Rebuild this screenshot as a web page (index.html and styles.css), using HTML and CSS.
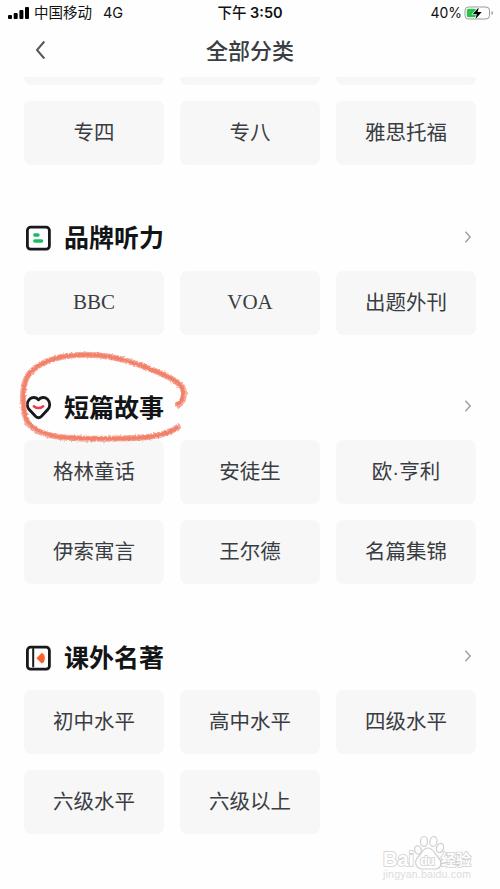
FILE: index.html
```html
<!DOCTYPE html>
<html lang="zh-CN">
<head>
<meta charset="utf-8">
<title>全部分类</title>
<link rel="stylesheet" href="styles.css">
</head>
<body>
<main class="screen">
  <div class="status">
    <div class="carrier">
      <svg width="22" height="14" viewBox="0 0 22 14"><rect x="0" y="9" width="4" height="4" rx="1"/><rect x="5.7" y="7" width="4" height="6" rx="1"/><rect x="11.4" y="4" width="4" height="9" rx="1"/><rect x="17" y="1" width="4" height="12" rx="1"/></svg>
      <span class="operator">中国移动</span><span class="network">4G</span>
    </div>
    <div class="clock"><span>下午</span> 3:50</div>
    <div class="battery"><span>40%</span>
      <svg width="30" height="14" viewBox="0 0 30 14"><rect x="1" y="1" width="24.5" height="12" rx="3.5" fill="none" stroke="#999"/><path d="M27.5 5v4q1.5-.7 1.5-2t-1.5-2z" fill="#999"/><rect x="2.8" y="2.8" width="9.5" height="8.4" rx="1.6" fill="#27c34e"/><path d="M14.9 1.2 8.8 8h4l-1.5 5.2L17.7 6h-4.1z" fill="#000" stroke="#fff" stroke-width="1.2" paint-order="stroke"/></svg>
    </div>
  </div>
  <header class="nav">
    <svg class="back" width="12" height="20" viewBox="0 0 12 20"><path d="M9.3 1.5 2 10l7.3 8.5"/></svg>
    <h1>全部分类</h1>
  </header>
  <div class="content">
    <section class="section first">
      <div class="grid"><div class="card stub"></div><div class="card stub"></div><div class="card stub"></div>
      <div class="card">专四</div><div class="card">专八</div><div class="card">雅思托福</div></div>
    </section>
    <section class="section">
      <div class="heading">
        <svg class="icon" width="28" height="28" viewBox="0 0 28 28"><rect x="3.4" y="3.2" width="22" height="22" rx="3.2"/><path class="green" d="M10.8 11h3.2M10.8 17h6.8"/></svg>
        <h2>品牌听力</h2>
        <svg class="more" width="8" height="12" viewBox="0 0 8 12"><path d="M1.4.8 6.2 6l-4.8 5.2"/></svg>
      </div>
      <div class="grid"><div class="card latin">BBC</div><div class="card latin">VOA</div><div class="card">出题外刊</div></div>
    </section>
    <section class="section">
      <div class="heading">
        <svg class="icon" width="28" height="28" viewBox="0 0 28 28"><path d="M14.500 5.800C12.300 3 8.200 2.700 5.500 5.200 2.500 8.200 2.700 12.700 5.200 15.500l6.300 6.800Q14.500 25.200 17.500 22.300l6.300-6.800C26.300 12.700 26.500 8.200 23.500 5.200 20.800 2.700 16.700 3 14.500 5.800Z"/><path class="smile" d="M9.800 12.200Q14.500 16 19.200 12.200"/></svg>
        <h2>短篇故事</h2>
        <svg class="more" width="8" height="12" viewBox="0 0 8 12"><path d="M1.4.8 6.200 6l-4.800 5.200"/></svg>
      </div>
      <div class="grid"><div class="card">格林童话</div><div class="card">安徒生</div><div class="card">欧·亨利</div><div class="card">伊索寓言</div><div class="card">王尔德</div><div class="card">名篇集锦</div></div>
    </section>
    <section class="section">
      <div class="heading">
        <svg class="icon" width="28" height="28" viewBox="0 0 28 28"><rect x="3.400" y="3.200" width="22" height="22" rx="3.200"/><path class="spine" d="M9.200 5v17.500"/><path class="orange" d="M12.400 14.200l5.200-5.200q3.200.8 3.200 5.200t-3.200 5.200z"/></svg>
        <h2>课外名著</h2>
        <svg class="more" width="8" height="12" viewBox="0 0 8 12"><path d="M1.400.800 6.200 6l-4.800 5.200"/></svg>
      </div>
      <div class="grid"><div class="card">初中水平</div><div class="card">高中水平</div><div class="card">四级水平</div><div class="card">六级水平</div><div class="card">六级以上</div></div>
    </section>
  </div>
  <svg class="marker" width="180" height="100" viewBox="14 346 180 100">
    <defs><filter id="crayon" x="-10%" y="-10%" width="120%" height="120%"><feTurbulence type="fractalNoise" baseFrequency=".45" numOctaves="2" seed="4" result="n"/><feDisplacementMap in="SourceGraphic" in2="n" scale="3" xChannelSelector="R" yChannelSelector="G"/><feGaussianBlur stdDeviation=".45"/></filter></defs>
    <g filter="url(#crayon)">
      <path class="stroke-soft" d="M178 405C185 401 185 391 182 387C175 378 156 371 137 364C117 357 97 354 78 355C56 356 38 363 29 374C21 384 22 406 26 419C30 430 43 435 60 437C85 440 110 439 135 438C156 437 170 433 178 427"/>
      <path class="stroke-core" d="M178 404C184 400 184 391 182 387C175 378 156 371 137 364C117 357 97 354 78 355C56 356 38 363 29 374C22 384 22 405 26 418C30 429 43 434 60 437C85 439 110 439 135 438C156 437 170 433 177 428"/>
    </g>
  </svg>
  <div class="watermark">
    <svg width="96" height="52" viewBox="0 0 96 52">
      <g class="outline"><ellipse cx="39" cy="19" rx="3.200" ry="4.300" transform="rotate(-18 39 19)"/><ellipse cx="45" cy="10.500" rx="3.500" ry="5"/><ellipse cx="54.500" cy="10.500" rx="3.500" ry="5" transform="rotate(10 54.500 10.500)"/><ellipse cx="61" cy="17" rx="3.500" ry="4.600" transform="rotate(20 61 17)"/><path d="M49 17c-6 0-6 6-10 9-4 4-3 11 4 12h14c6-1 6-8 2-12s-5-9-10-9z"/></g>
      <g class="lettering"><text x="4" y="35" class="bai" textLength="31" lengthAdjust="spacingAndGlyphs">Bai</text><text x="41" y="34" class="du" textLength="15">du</text><text x="62" y="34" class="exp" textLength="30">经验</text></g>
      <text x="4" y="47" class="url" textLength="88">jingyan.baidu.com</text>
    </svg>
  </div>
</main>
</body>
</html>
```
FILE: styles.css
```css
* { box-sizing: border-box; }
body { margin: 0; background: #fff; font-family: "Liberation Sans", "Noto Sans CJK SC", sans-serif; }
.screen { position: relative; width: 500px; height: 889px; overflow: hidden; background: #fefefe; }
.status { display: grid; grid-template-columns: 1fr auto 1fr; align-items: center; height: 26px; padding: 0 6px 0 8px; color: #111; font: 14.5px/26px Inter, "Noto Sans CJK SC", sans-serif; }
.carrier, .battery { display: flex; align-items: center; }
.operator { margin-left: 4px; }
.network { margin-left: 11px; }
.clock { margin-right: 2px; font-weight: 600; font-size: 14.5px; }
.clock span { font-weight: 500; }
.battery { justify-content: flex-end; gap: 2px; font-size: 14px; }
.nav { display: flex; align-items: center; justify-content: center; position: relative; height: 51px; }
.nav h1 { margin: 0; color: #3a3e43; font-size: 22px; line-height: 32px; font-weight: 500; }
.back { position: absolute; left: 35px; top: 14px; }
.back path { fill: none; stroke: #55585b; stroke-width: 2; }
.content { padding: 0 24px; }
.section { height: 250px; }
.section.first { height: 133.5px; }
.section:nth-child(2) { height: 169.5px; }
.grid { display: grid; grid-template-columns: repeat(3, 140px); gap: 16px; }
.card { display: flex; align-items: center; justify-content: center; height: 64px; border-radius: 7px; background: #f7f7f7; color: #393d42; font-size: 20.5px; line-height: 30px; }
.stub { height: 8px; border-radius: 0 0 7px 7px; }
.latin { font-family: "Liberation Serif", serif; font-size: 21px; line-height: 26px; padding-bottom: 1px; }
.heading { display: flex; align-items: center; height: 60px; padding-bottom: 5px; }
.heading h2 { margin: 0 0 0 12px; color: #121416; font-size: 25px; line-height: 36px; font-weight: 700; }
.icon { fill: none; stroke: #17191c; stroke-width: 2.8; stroke-linejoin: round; stroke-linecap: round; }
.icon .green { stroke: #18bd62; stroke-width: 3.4; }
.icon .smile { stroke: #e83d50; stroke-width: 2.4; }
.icon .spine { stroke-width: 2; }
.icon .orange { fill: #fa612d; stroke: none; }
.more { margin: 0 4px 3px auto; fill: none; stroke: #999; stroke-width: 1.3; }
.marker { position: absolute; left: 14px; top: 346px; fill: none; stroke: #ef7157; stroke-linecap: round; }
.stroke-soft { stroke-width: 6; opacity: .6; }
.stroke-core { stroke-width: 3.5; opacity: .7; }
.watermark { position: absolute; left: 379px; top: 831px; height: 52px; }
.outline { fill: #fff; stroke: #cfcfcf; stroke-width: 1.2; }
.lettering { fill: #fff; stroke: #cfcfcf; stroke-width: 1.6; paint-order: stroke; font-weight: 700; }
.bai { font-size: 20px; }
.du { font-size: 13px; }
.exp { font-size: 15px; }
.url { fill: #ddd; font-size: 10.5px; }
```
